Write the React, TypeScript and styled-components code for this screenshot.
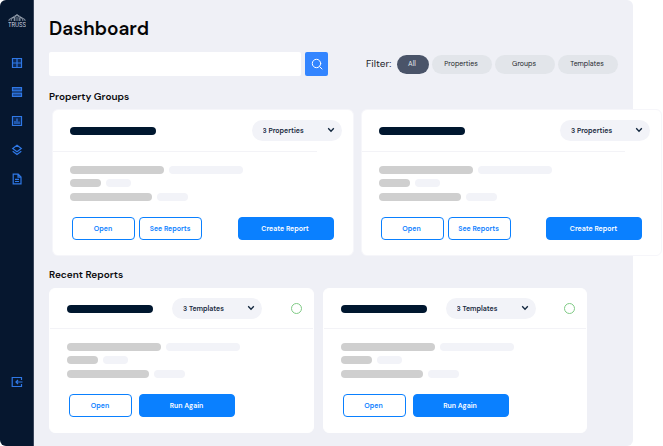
import React from "react";
import styled, { createGlobalStyle } from "styled-components";

const GlobalStyle = createGlobalStyle`
  *, *::before, *::after { box-sizing: border-box; }
  body { margin: 0; background: #ffffff; }
  body, button, input, select { font-family: "DM Sans", Inter, "Liberation Sans", sans-serif; }
`;

const Frame = styled.div`
  display: flex;
  min-height: 100vh;
  margin-right: 30px;
  background: #eff0f6;
  border-radius: 6px;
`;

const Sidebar = styled.aside`
  display: flex;
  flex-direction: column;
  align-items: center;
  flex: none;
  width: 34px;
  padding: 14px 0 58px;
  background: #06172f;
  border-right: 1px solid #39455a;
  border-radius: 6px 0 0 6px;
`;

const Nav = styled.nav`
  display: flex;
  flex-direction: column;
  flex: 1;
  gap: 17px;
  margin-top: 29px;
`;

const NavLink = styled.a<{ $last?: boolean }>`
  display: block;
  width: 12px;
  height: 12px;
  margin-top: ${(p) => (p.$last ? "auto" : "0")};
  color: #2f78e6;
  svg { display: block; }
`;

const Main = styled.main`
  flex: 1;
  min-width: 0;
  padding: 15px 15px 12px;
`;

const Title = styled.h1`
  margin: 0;
  font-size: 19px;
  line-height: 28px;
  font-weight: 600;
  color: #050505;
`;

const Toolbar = styled.div`
  display: flex;
  align-items: center;
  margin-top: 9px;
`;

const SearchForm = styled.form`
  display: flex;
  flex: 1;
  gap: 4px;
  min-width: 0;
`;

const SearchInput = styled.input`
  flex: 1;
  min-width: 0;
  height: 24px;
  padding: 0 8px;
  font-size: 10px;
  border: 0;
  border-radius: 2px;
  background: #ffffff;
`;

const SearchButton = styled.button`
  display: flex;
  align-items: center;
  justify-content: center;
  width: 23px;
  height: 24px;
  padding: 0;
  border: 0;
  border-radius: 2px;
  color: #ffffff;
  background: #3385ff;
`;

const Filters = styled.div`
  display: flex;
  align-items: center;
  gap: 3px;
  margin-left: 38px;
`;

const FilterLabel = styled.span`
  width: 28px;
  font-size: 10px;
  line-height: 16px;
  color: #222429;
  white-space: nowrap;
`;

const Pill = styled.button<{ $active?: boolean }>`
  width: ${(p) => (p.$active ? "32px" : "60px")};
  height: 19px;
  padding: 0 2px 1px 0;
  border: 0;
  border-radius: 10px;
  font-size: 7px;
  line-height: 18px;
  color: ${(p) => (p.$active ? "#e6e8ec" : "#25282d")};
  background: ${(p) => (p.$active ? "#4a5469" : "#e2e5ea")};
`;

const SectionTitle = styled.h2<{ $first?: boolean }>`
  margin: ${(p) => (p.$first ? "13px 0 4px" : "11px 0 5px")};
  font-size: 10px;
  line-height: 16px;
  font-weight: 600;
  color: #0a0a0c;
`;

const GroupGrid = styled.div`
  display: grid;
  grid-template-columns: repeat(2, minmax(0, 1fr));
  gap: 7px;
  margin: 0 -44px 0 3px;
`;

const ReportGrid = styled.div`
  display: grid;
  grid-template-columns: repeat(2, minmax(0, 1fr));
  gap: 9px;
  margin-right: 31px;
`;

const CardBox = styled.article<{ $report?: boolean }>`
  display: flex;
  flex-direction: column;
  padding-bottom: 15px;
  border-radius: 6px;
  border: 1px solid ${(p) => (p.$report ? "#ffffff" : "#f6f6fa")};
  background: #ffffff;
`;

const CardHead = styled.header<{ $report?: boolean }>`
  display: flex;
  align-items: center;
  height: ${(p) => (p.$report ? "39px" : "41px")};
  padding: 0 11px 0 17px;
`;

const NameBar = styled.div`
  width: 86px;
  height: 8px;
  border-radius: 4px;
  background: #00172f;
`;

const SelectWrap = styled.div<{ $report?: boolean }>`
  position: relative;
  margin-left: ${(p) => (p.$report ? "19px" : "auto")};
  svg {
    position: absolute;
    right: 7px;
    top: 7px;
    pointer-events: none;
  }
`;

const Select = styled.select`
  display: block;
  appearance: none;
  width: 90px;
  height: 21px;
  padding: 0 0 0 11px;
  border: 0;
  border-radius: 11px;
  font-size: 7px;
  font-weight: 600;
  color: #172a40;
  background: #f2f3f8;
`;

const Status = styled.span`
  width: 11px;
  height: 11px;
  margin-left: auto;
  border: 1px solid #7fcb85;
  border-radius: 50%;
`;

const Divider = styled.hr<{ $report?: boolean }>`
  width: ${(p) => (p.$report ? "100%" : "88%")};
  height: 1px;
  margin: 0;
  border: 0;
  background: #f3f3f7;
`;

const Lines = styled.div`
  display: flex;
  flex-direction: column;
  gap: 5px;
  padding: 14px 17px 0;
`;

const Line = styled.div`
  display: flex;
  gap: 5px;
  &:last-child { padding-top: 1px; }
`;

const Bar = styled.div<{ $w: number; $light?: boolean }>`
  width: ${(p) => p.$w}px;
  height: 8px;
  border-radius: 4px;
  background: ${(p) => (p.$light ? "#f2f3f8" : "#cfcfcf")};
`;

const Actions = styled.div<{ $report?: boolean }>`
  display: flex;
  gap: ${(p) => (p.$report ? "7px" : "4px")};
  padding: 16px 19px 0;
`;

const Button = styled.button<{ $primary?: boolean; $push?: boolean }>`
  width: ${(p) => (p.$primary ? "96px" : "63px")};
  height: 23px;
  margin-left: ${(p) => (p.$push ? "auto" : "0")};
  padding: 0 1px 0 0;
  border: 1px solid #0a80ff;
  border-radius: 4px;
  font-size: 7px;
  font-weight: 600;
  white-space: nowrap;
  color: ${(p) => (p.$primary ? "#ffffff" : "#0a80ff")};
  background: ${(p) => (p.$primary ? "#0a80ff" : "#ffffff")};
`;

const Logo = () => (
  <svg width="18" height="14" viewBox="0 0 18 14" role="img" aria-label="Truss">
    <g fill="none" stroke="#b9c1cd" strokeWidth="0.7">
      <path d="M1 7V5.600L9 .7l8 4.900V7M3.200 7V5l3-1.900V7M9 .7 6.900 3v4M9 .7 11.100 3v4M9 2.500V7M14.800 7V5l-3-1.900M12 7V4" />
    </g>
    <text x="9" y="12.500" textAnchor="middle" fontFamily="Inter, sans-serif" fontSize="5.500" fill="#d5dae2">TRUSS</text>
  </svg>
);

const icons: { label: string; art: React.ReactNode }[] = [
  { label: "Overview", art: <path d="M1.500 1.500h9v9h-9zM6 1.500v9M1.500 6h9" fill="#0d2a57" /> },
  { label: "Lists", art: <path d="M1.500 1.500h9v3.400h-9zM1.500 7.100h9v3.400h-9z" fill="#1b4c9a" /> },
  {
    label: "Statistics",
    art: (
      <>
        <path d="M1.500 1.500h9v9h-9z" fill="#0d2a57" />
        <path d="M4 9V6M6 9V3.500M8 9V6.500" />
      </>
    ),
  },
  { label: "Layers", art: <path d="M6 1.200 10.300 4.500 6 7.800 1.700 4.500zM1.700 7.200 6 10.500l4.300-3.300" /> },
  { label: "Documents", art: <path d="M2.200 1.200h5L10 4v6.800H2.200zM7 1.200V4.200h3M4 6.300h4M4 8.500h4" /> },
];

const NavIcon = ({ children }: { children: React.ReactNode }) => (
  <svg width="12" height="12" viewBox="0 0 12 12" fill="none" stroke="currentColor" strokeWidth="1.200" aria-hidden="true">
    {children}
  </svg>
);

const Chevron = () => (
  <svg width="8" height="6" viewBox="0 0 8 6" fill="none" stroke="#10253c" strokeWidth="1.300" aria-hidden="true">
    <path d="M1.200 1.300 4 4.200l2.800-2.900" />
  </svg>
);

const Card = ({ kind, name }: { kind: "group" | "report"; name: string }) => {
  const report = kind === "report";
  return (
    <CardBox $report={report} aria-label={name}>
      <CardHead $report={report}>
        <NameBar />
        <SelectWrap $report={report}>
          <Select aria-label={`${name} contents`}>
            <option>{report ? "3 Templates" : "3 Properties"}</option>
          </Select>
          <Chevron />
        </SelectWrap>
        {report && <Status role="img" aria-label="Complete" />}
      </CardHead>
      <Divider $report={report} />
      <Lines>
        <Line><Bar $w={94} /><Bar $w={74} $light /></Line>
        <Line><Bar $w={31} /><Bar $w={25} $light /></Line>
        <Line><Bar $w={82} /><Bar $w={31} $light /></Line>
      </Lines>
      <Actions $report={report}>
        <Button type="button">Open</Button>
        {!report && <Button type="button">See Reports</Button>}
        <Button type="button" $primary $push={!report}>{report ? "Run Again" : "Create Report"}</Button>
      </Actions>
    </CardBox>
  );
};

export default function App() {
  return (
    <>
      <GlobalStyle />
      <Frame>
        <Sidebar>
          <Logo />
          <Nav aria-label="Main">
            {icons.map((icon) => (
              <NavLink key={icon.label} href="#" aria-label={icon.label}>
                <NavIcon>{icon.art}</NavIcon>
              </NavLink>
            ))}
            <NavLink href="#" aria-label="Log out" $last>
              <NavIcon>
                <path d="M10.500 4V1.500H1.200v9h9.300V8M11.500 6H5M7 4 5 6l2 2" />
              </NavIcon>
            </NavLink>
          </Nav>
        </Sidebar>
        <Main>
          <Title>Dashboard</Title>
          <Toolbar>
            <SearchForm role="search">
              <SearchInput type="search" aria-label="Search" />
              <SearchButton type="button" aria-label="Search">
                <svg width="12" height="12" viewBox="0 0 12 12" fill="none" stroke="currentColor" strokeWidth="1" strokeLinecap="round">
                  <circle cx="5.500" cy="5.500" r="4.200" />
                  <path d="m8.700 8.700 2.300 2.300" />
                </svg>
              </SearchButton>
            </SearchForm>
            <Filters role="group" aria-label="Filter">
              <FilterLabel>Filter:</FilterLabel>
              <Pill type="button" $active aria-pressed="true">All</Pill>
              <Pill type="button">Properties</Pill>
              <Pill type="button">Groups</Pill>
              <Pill type="button">Templates</Pill>
            </Filters>
          </Toolbar>
          <SectionTitle $first>Property Groups</SectionTitle>
          <GroupGrid>
            <Card kind="group" name="First group" />
            <Card kind="group" name="Second group" />
          </GroupGrid>
          <SectionTitle>Recent Reports</SectionTitle>
          <ReportGrid>
            <Card kind="report" name="First report" />
            <Card kind="report" name="Second report" />
          </ReportGrid>
        </Main>
      </Frame>
    </>
  );
}
